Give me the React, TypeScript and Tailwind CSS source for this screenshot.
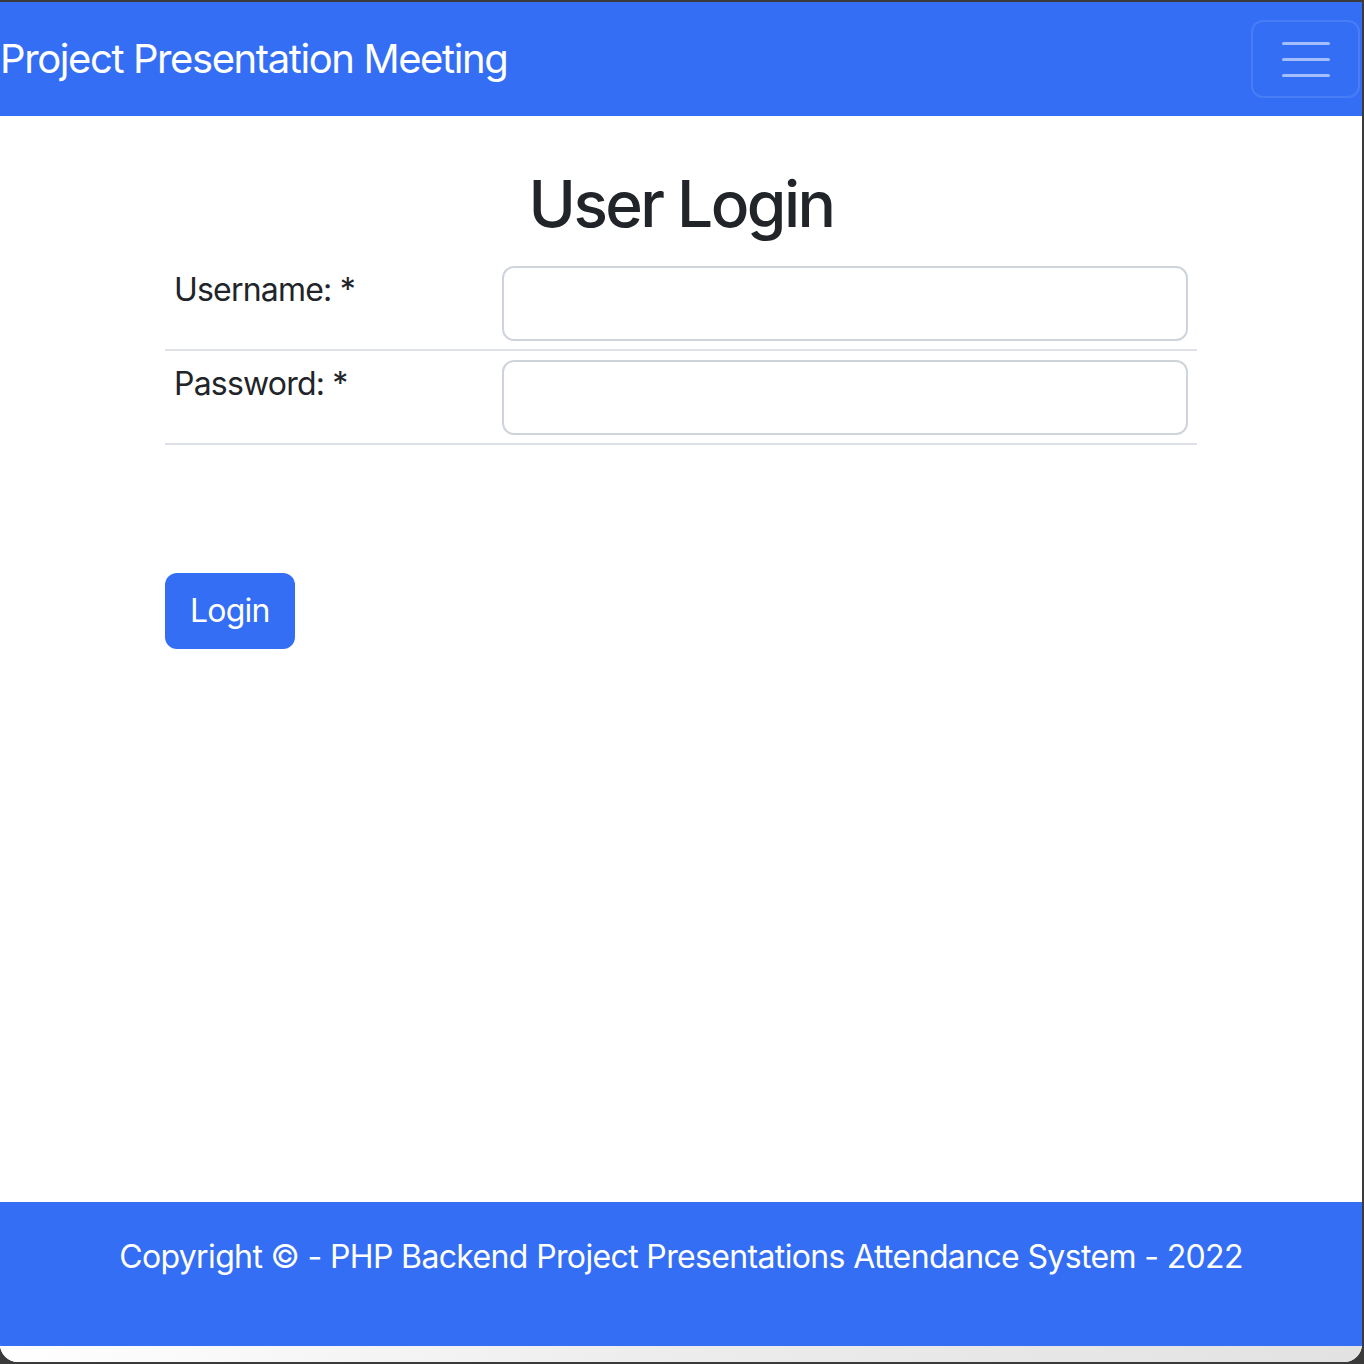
import React from "react";

const font = { fontFamily: "Inter, 'Noto Sans', 'Liberation Sans', sans-serif" };

function Navbar() {
    return (
        <nav className="flex h-[114px] shrink-0 items-center justify-between bg-[#346ef5]">
            <span className="text-[40px] leading-[60px] tracking-[-0.035em] text-white">
                Project Presentation Meeting
            </span>
            <button className="mr-[2px] flex h-[78px] w-[109px] flex-col items-center justify-center gap-[13px] rounded-[12px] border-2 border-white/10">
                <span className="h-[3px] w-[48px] rounded-full bg-white/55" />
                <span className="h-[3px] w-[48px] rounded-full bg-white/55" />
                <span className="h-[3px] w-[48px] rounded-full bg-white/55" />
            </button>
        </nav>
    );
}

function FieldRow({ label, type }: { label: string; type: string }) {
    return (
        <div className="flex items-start border-b-2 border-[#dee2e6] px-[9px] pb-[8px] pt-[9px]">
            <label className="w-[328px] text-[32px] leading-[48px] tracking-[-0.025em] text-[#212529]">{label}</label>
            <input
                type={type}
                className="h-[75px] w-[686px] rounded-[12px] border-2 border-[#ced4da] bg-white px-4 text-[32px] outline-none"
            />
        </div>
    );
}

export default function App() {
    return (
        <div className="h-[1364px] w-[1364px] bg-[#3a3a3a] pb-[2px] pr-[2px] pt-[2px]" style={font}>
            <div className="flex h-full flex-col overflow-hidden rounded-b-[18px] bg-white">
                <Navbar />

                {/* Login form */}
                <main className="flex-1">
                    <div className="mx-auto w-[1032px]">
                        <h1 className="mt-[49px] mb-[15px] text-center text-[64px] font-medium leading-[77px] tracking-[-0.04em] text-[#212529]">
                            User Login
                        </h1>
                        <FieldRow label="Username: *" type="text" />
                        <FieldRow label="Password: *" type="password" />
                        <button className="mt-[128px] h-[76px] rounded-[12px] bg-[#346ef5] px-[25px] text-[32px] leading-[48px] tracking-[-0.025em] text-white">
                            Login
                        </button>
                    </div>
                </main>

                <footer className="flex h-[144px] shrink-0 justify-center bg-[#346ef5] pt-[31px]">
                    <p className="text-[32px] leading-[48px] tracking-[-0.02em] text-white">
                        Copyright © - PHP Backend Project Presentations Attendance System - 2022
                    </p>
                </footer>
                <div className="h-[16px] shrink-0 bg-gradient-to-r from-white via-[#ececec] to-[#e2e2e2]" />
            </div>
        </div>
    );
}
